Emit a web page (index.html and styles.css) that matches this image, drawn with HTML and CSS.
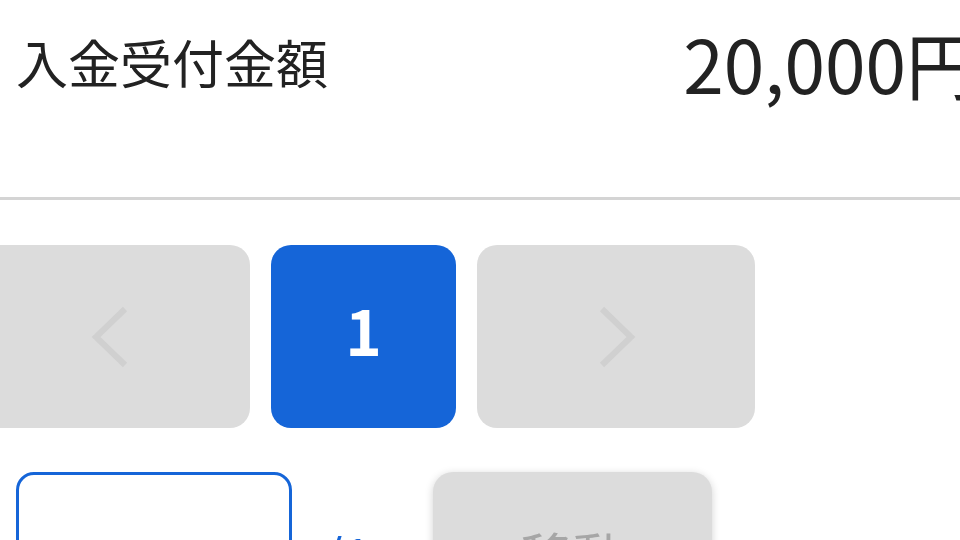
FILE: index.html
```html
<!DOCTYPE html>
<html lang="ja">
<head>
<meta charset="utf-8">
<title>入金受付金額</title>
<link rel="stylesheet" href="styles.css">
</head>
<body>
<main class="page">
  <section class="summary">
    <div class="summary-row">
      <span class="summary-label">入金受付金額</span>
      <span class="summary-amount">20,000円</span>
    </div>
  </section>

  <nav class="pager">
    <button class="pager-btn pager-nav" type="button" aria-label="前へ">
      <svg class="chev" width="40" height="64" viewBox="0 0 40 64"><polyline points="34,4 5,32 34,60" /></svg>
    </button>
    <button class="pager-btn pager-current" type="button">1</button>
    <button class="pager-btn pager-nav" type="button" aria-label="次へ">
      <svg class="chev" width="40" height="64" viewBox="0 0 40 64"><polyline points="6,4 35,32 6,60" /></svg>
    </button>
  </nav>

  <div class="jump">
    <div class="jump-input"></div>
    <span class="jump-total">/1</span>
    <button class="jump-btn" type="button">移動</button>
  </div>
</main>
</body>
</html>
```

FILE: styles.css
```css
html, body {
  margin: 0;
  padding: 0;
  background: #ffffff;
  overflow: hidden;
}

body {
  width: 960px;
  height: 540px;
  font-family: "Noto Sans CJK JP", "Noto Sans", sans-serif;
  color: #222222;
}

.page {
  width: 1000px;
}

.summary {
  height: 197px;
  border-bottom: 3px solid #d4d4d4;
}

.summary-row {
  display: flex;
  align-items: center;
  justify-content: space-between;
  height: 124px;
  padding-left: 16px;
  padding-right: 21px;
}

.summary-label {
  font-size: 52px;
  line-height: 1;
}

.summary-amount {
  font-size: 73px;
  line-height: 1;
  white-space: nowrap;
}

.pager {
  display: flex;
  gap: 21px;
  margin-top: 45px;
  margin-left: -28px;
}

.pager-btn {
  display: flex;
  align-items: center;
  justify-content: center;
  height: 183px;
  border: none;
  border-radius: 20px;
  padding: 0;
  font-family: inherit;
}

.pager-nav {
  width: 278px;
  background: #dcdcdc;
}

.chev polyline {
  fill: none;
  stroke: #d0d0d0;
  stroke-width: 6;
}

.pager-current {
  width: 185px;
  padding-bottom: 16px;
  background: #1565d8;
  color: #ffffff;
  font-size: 62px;
  font-weight: 700;
  line-height: 1;
}

.jump {
  display: flex;
  align-items: center;
  margin-top: 44px;
  padding-left: 16px;
}

.jump-input {
  width: 270px;
  height: 158px;
  border: 3px solid #1565d8;
  border-radius: 18px;
  background: #ffffff;
}

.jump-total {
  width: 141px;
  padding-left: 30px;
  box-sizing: border-box;
  font-size: 52px;
  color: #1565d8;
}

.jump-btn {
  width: 279px;
  height: 164px;
  border: none;
  border-radius: 20px;
  background: #dcdcdc;
  color: #a6a6a6;
  font-family: inherit;
  font-size: 52px;
  box-shadow: 0 2px 8px rgba(0, 0, 0, 0.18);
}
```
